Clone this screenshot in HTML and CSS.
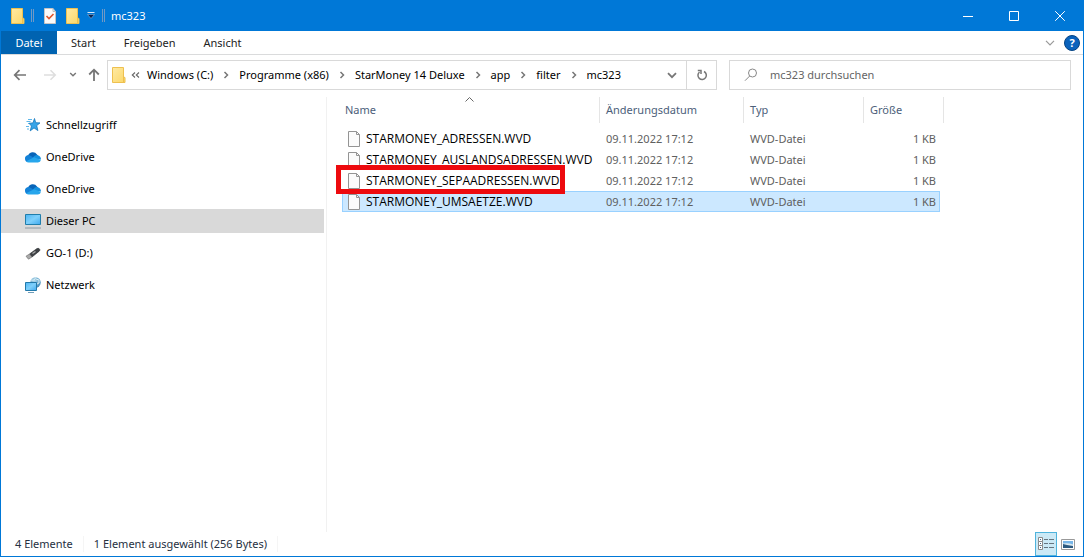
FILE: index.html
```html
<!DOCTYPE html>
<html lang="de">
<head>
<meta charset="utf-8">
<title>mc323</title>
<link rel="stylesheet" href="styles.css">
</head>
<body>
<svg class="defs" aria-hidden="true">
  <defs>
    <linearGradient id="g-folder" x1="0" y1="0" x2="1" y2="1"><stop offset="0" stop-color="#ffeaa4"/><stop offset="1" stop-color="#fbd768"/></linearGradient>
    <linearGradient id="g-screen" x1="0" y1="0" x2="1" y2="1"><stop offset="0" stop-color="#4db5f3"/><stop offset=".5" stop-color="#7fd0fb"/><stop offset="1" stop-color="#3fa9ee"/></linearGradient>
    <radialGradient id="g-globe" cx=".4" cy=".3" r=".8"><stop offset="0" stop-color="#b5dcee"/><stop offset="1" stop-color="#2f7fb4"/></radialGradient>
    <symbol id="folder" viewBox="0 0 14 16"><path d="M.5.5h11v9.5l1.500.5v5H.5z" fill="url(#g-folder)" stroke="#eec04f"/><path d="M11.500 10v5" stroke="#eec04f"/></symbol>
    <symbol id="file" viewBox="0 0 14 16"><path d="M1.500.5h8l3 3v12h-11z" fill="#fbfbfb" stroke="#949494"/><path d="M9.500.5v3h3" fill="none" stroke="#949494"/></symbol>
    <symbol id="cloud" viewBox="0 0 16 12"><path d="M3 5A5 5 0 0 1 12 3.500L14 6 8 8z" fill="#0864b8"/><path d="M0 8.200A3.500 3.500 0 0 1 4.500 4.200L12 8.500 2 11A3.500 3.500 0 0 1 0 8.200z" fill="#1482d8"/><path d="M8 6.500Q10 3 12.500 4.200 16 5 16 8.500 10 9 8 6.500z" fill="#1490df"/><path d="M1.200 10.300L9 6.200l6.800 2.900Q15.500 11.500 13 11.500H3.500Q2 11.500 1.200 10.300z" fill="#27a6ec"/></symbol>
    <symbol id="chev" viewBox="0 0 6 8"><path d="M1.500 1l3 3-3 3" fill="none" stroke="#777" stroke-width="1.500"/></symbol>
  </defs>
</svg>
<div class="window">
  <header class="titlebar">
    <div class="quick">
      <svg class="i-folder" viewBox="0 0 14 16"><use href="#folder"/></svg>
      <span class="bar bar-a"></span>
      <button class="plain" aria-label="Eigenschaften"><svg width="12" height="16" viewBox="0 0 12 16"><path d="M.5.500h8.500l2.500 3v12H.500z" fill="#fafafa" stroke="#c8c4c4"/><path d="M9 .5v3h2.500" fill="none" stroke="#bbb"/><path d="M2.500 8l2.500 2.500 4.500-4.500" fill="none" stroke="#df552e" stroke-width="1.600"/></svg></button>
      <button class="plain new-folder" aria-label="Neuer Ordner"><svg class="i-folder" viewBox="0 0 14 16"><use href="#folder"/></svg></button>
      <button class="plain more" aria-label="Symbolleiste anpassen"><svg width="8" height="7" viewBox="0 0 8 7"><path d="M.5.500h7" stroke="#d9e9f8"/><path d="M.5 2.500h7L4 6.500z" fill="#09234f" stroke="#a9c8ea" stroke-width=".5"/></svg></button>
      <span class="bar"></span>
    </div>
    <h1 class="title">mc323</h1>
    <div class="controls">
      <button aria-label="Minimieren"><svg width="10" height="10" viewBox="0 0 10 10"><path d="M0 5.500h10"/></svg></button>
      <button aria-label="Maximieren"><svg width="10" height="10" viewBox="0 0 10 10"><path d="M.5.500h9v9h-9z"/></svg></button>
      <button aria-label="Schließen"><svg width="10" height="10" viewBox="0 0 10 10"><path d="M.2.200l9.600 9.600M9.800.200L.2 9.800"/></svg></button>
    </div>
  </header>
  <nav class="ribbon">
    <button class="tab active">Datei</button>
    <button class="tab">Start</button>
    <button class="tab">Freigeben</button>
    <button class="tab">Ansicht</button>
    <button class="plain expand" aria-label="Menüband erweitern"><svg width="10" height="6" viewBox="0 0 10 6"><path d="M1 .8l4 4 4-4" fill="none" stroke="#999" stroke-width="1.200"/></svg></button>
    <button class="help" aria-label="Hilfe">?</button>
  </nav>
  <div class="address-row">
    <div class="history">
      <button class="plain" aria-label="Zurück"><svg width="14" height="12" viewBox="0 0 14 12"><path d="M13 6H2M6.500 1.200L1.700 6l4.800 4.800" fill="none" stroke="#767676" stroke-width="1.700"/></svg></button>
      <button class="plain fwd" aria-label="Vorwärts"><svg width="14" height="12" viewBox="0 0 14 12"><path d="M1 6h11M7.500 1.200L12.300 6l-4.800 4.800" fill="none" stroke="#dedede" stroke-width="1.500"/></svg></button>
      <button class="plain recent" aria-label="Zuletzt besucht"><svg width="8" height="6" viewBox="0 0 8 6"><path d="M1.200 1L4 3.800 6.800 1" fill="none" stroke="#777" stroke-width="1.400"/></svg></button>
      <button class="plain" aria-label="Nach oben"><svg width="12" height="14" viewBox="0 0 12 14"><path d="M6 13V2M1.200 6.500L6 1.700l4.800 4.800" fill="none" stroke="#767676" stroke-width="1.800"/></svg></button>
    </div>
    <div class="address">
      <svg class="i-folder" viewBox="0 0 14 16"><use href="#folder"/></svg>
      <svg class="dbl" width="9" height="6" viewBox="0 0 9 6"><path d="M4 .5L1.300 3 4 5.500M8 .5L5.300 3 8 5.500" fill="none" stroke="#666" stroke-width="1.100"/></svg>
      <div class="crumbs">
        <a href="#">Windows (C:)</a><svg class="chev"><use href="#chev"/></svg>
        <a href="#">Programme (x86)</a><svg class="chev"><use href="#chev"/></svg>
        <a href="#">StarMoney 14 Deluxe</a><svg class="chev"><use href="#chev"/></svg>
        <a href="#">app</a><svg class="chev"><use href="#chev"/></svg>
        <a href="#">filter</a><svg class="chev"><use href="#chev"/></svg>
        <a href="#">mc323</a>
      </div>
      <button class="plain drop" aria-label="Vorherige Orte"><svg width="10" height="7" viewBox="0 0 10 7"><path d="M1 1.200l4 4 4-4" fill="none" stroke="#777" stroke-width="1.800"/></svg></button>
      <button class="plain refresh" aria-label="Aktualisieren"><svg width="12" height="12" viewBox="0 0 12 12"><path d="M8 2.500A4.200 4.200 0 1 1 3.500 3" fill="none" stroke="#777" stroke-width="1.500"/><path d="M1.800 1.500H5V5" fill="none" stroke="#777" stroke-width="1.500"/></svg></button>
    </div>
    <label class="search">
      <svg width="14" height="14" viewBox="0 0 14 14"><circle cx="8.500" cy="5" r="4" fill="none" stroke="#888"/><path d="M5.700 8L1 12.700" stroke="#888"/></svg>
      <input type="text" placeholder="mc323 durchsuchen" aria-label="mc323 durchsuchen">
    </label>
  </div>
  <main class="main">
    <nav class="sidebar">
      <a href="#"><svg width="16" height="16" viewBox="0 0 16 16"><path d="M9.500 1.500l1.200 4.200 4.300.2-3.300 2.700 1.200 5-3.900-2.700-3.800 3 1.300-4.900-2.500-2.700 4-.4z" fill="#39a5e8" stroke="#1577bd" stroke-width=".8"/><path d="M3 2.500h4M1.500 4.500h4M3 6.500h1M1 9.500h3M2 12h2" stroke="#5eb7e9"/></svg>Schnellzugriff</a>
      <a href="#"><svg width="16" height="12"><use href="#cloud"/></svg>OneDrive</a>
      <a href="#"><svg width="16" height="12"><use href="#cloud"/></svg>OneDrive</a>
      <a href="#" class="current"><svg width="16" height="16" viewBox="0 0 16 16"><path d="M.5 1.500h15v10H.5z" fill="url(#g-screen)" stroke="#207dab"/><path d="M0 15h16" stroke="#8b9aa4"/></svg>Dieser PC</a>
      <a href="#"><svg width="16" height="16" viewBox="0 0 16 16"><path d="M4.500 9L12 3.500q2-.8 2.800 1 .2 1-.6 1.700L7 12z" fill="#3e4145" stroke="#292b2e" stroke-width=".6"/><path d="M1 11.200L4.500 9 7 12l-3.500 2.200z" fill="#aaa" stroke="#666" stroke-width=".6"/><path d="M7.500 8.500l3-2" stroke="#aaa" stroke-width="1.400"/></svg>GO-1 (D:)</a>
      <a href="#"><svg width="16" height="16" viewBox="0 0 16 16"><circle cx="10.500" cy="5.500" r="5.200" fill="url(#g-globe)"/><path d="M6 3q4 1 4.500-2.500M11 2l3 1v3l-2 1" fill="none" stroke="#d8eef5"/><path d="M.5 5.500h11v8H.5z" fill="url(#g-screen)" stroke="#2279aa"/><path d="M3 15.500h6" stroke="#6f9db9"/></svg>Netzwerk</a>
    </nav>
    <section class="files">
      <table>
        <colgroup><col><col class="c-date"><col class="c-type"><col class="c-size"></colgroup>
        <thead><tr>
          <th scope="col">Name<svg class="sort" width="9" height="5" viewBox="0 0 9 5"><path d="M.5 4.500l4-4 4 4" fill="none" stroke="#666"/></svg></th>
          <th scope="col">Änderungsdatum</th><th scope="col">Typ</th><th scope="col">Größe</th>
        </tr></thead>
        <tbody>
          <tr><td><span class="name"><svg class="i-file"><use href="#file"/></svg>STARMONEY_ADRESSEN.WVD</span></td><td>09.11.2022 17:12</td><td>WVD-Datei</td><td>1 KB</td></tr>
          <tr><td><span class="name"><svg class="i-file"><use href="#file"/></svg>STARMONEY_AUSLANDSADRESSEN.WVD</span></td><td>09.11.2022 17:12</td><td>WVD-Datei</td><td>1 KB</td></tr>
          <tr><td><span class="name marked"><svg class="i-file"><use href="#file"/></svg>STARMONEY_SEPAADRESSEN.WVD</span></td><td>09.11.2022 17:12</td><td>WVD-Datei</td><td>1 KB</td></tr>
          <tr class="selected"><td><span class="name"><svg class="i-file"><use href="#file"/></svg>STARMONEY_UMSAETZE.WVD</span></td><td>09.11.2022 17:12</td><td>WVD-Datei</td><td>1 KB</td></tr>
        </tbody>
      </table>
    </section>
  </main>
  <footer class="status">
    <span class="info">4 Elemente</span><span class="info">1 Element ausgewählt (256 Bytes)</span>
    <div class="views">
      <button class="view on" aria-label="Details"><svg width="16" height="14" viewBox="0 0 16 14"><path d="M.5.500h4v4h-4zM.5 4.500h4v4h-4zM.5 8.500h4v4h-4z" fill="#fff" stroke="#8a8a8a"/><path d="M2 2.500h1M2 6.500h1M2 10.500h1" stroke="#468"/><path d="M6 2.500h4M11 2.500h5M6 6.500h4M11 6.500h5M6 10.500h4M11 10.500h5" stroke="#667580"/></svg></button>
      <button class="view" aria-label="Große Symbole"><svg width="14" height="11" viewBox="0 0 14 11"><path d="M.5.500h13v10H.5z" fill="#fff" stroke="#999"/><path d="M2 2h10v7H2z" fill="#78b6e8"/><path d="M2 4.500q5-1 10 1V7H2z" fill="#dceaf1"/><path d="M2 5l4 1 6 1v2H2z" fill="#2c5a80"/></svg></button>
    </div>
  </footer>
</div>
</body>
</html>
```

FILE: styles.css
```css
* { box-sizing: border-box; }
body { margin: 0; font: 11px/16px "Noto Sans", "Open Sans", sans-serif; color: #000; background: #fff; }
button, input { font: inherit; color: inherit; }
a { color: inherit; text-decoration: none; }
svg { display: block; flex: none; }
.defs { position: absolute; width: 0; height: 0; }
.window { display: flex; flex-direction: column; min-height: 100vh; border: 1px solid #0078d7; border-top: 0; }
.plain { display: flex; padding: 0; border: 0; background: none; }
.i-folder { width: 14px; height: 16px; }

.titlebar { display: flex; align-items: center; height: 31px; background: #0078d7; color: #fff; }
.quick { display: flex; align-items: center; padding-left: 10px; }
.bar { width: 3px; height: 13px; border: solid #7299c4; border-width: 0 1px; }
.bar-a { margin: 0 10px 0 6px; }
.new-folder { margin-left: 10px; }
.more { margin: 0 7px; }
.title { margin: 0 0 0 6px; font-size: 11px; font-weight: 400; }
.controls { display: flex; align-self: stretch; margin-left: auto; }
.controls button { display: flex; align-items: center; justify-content: center; width: 46px; padding: 0; border: 0; background: none; }
.controls path { fill: none; stroke: #fff; }

.ribbon { display: flex; align-items: center; height: 24px; border-bottom: 1px solid #dadbdc; padding-right: 3px; }
.tab { align-self: stretch; padding: 0 14px; border: 0; background: none; color: #222; }
.active { width: 56px; background: #0063b1; color: #fff; }
.expand { margin-left: auto; }
.help { width: 16px; height: 16px; margin-left: 9px; padding: 0; border: 1px solid #064484; border-radius: 50%; background: #0a62bc; color: #fff; font-weight: 700; line-height: 14px; }

.address-row { display: flex; align-items: center; height: 40px; padding: 0 12px; }
.history { display: flex; align-items: center; width: 94px; }
.fwd { margin-left: 16px; }
.recent { margin: 0 11px 0 12px; }
.address { display: flex; flex: 610 1 610px; align-items: center; height: 30px; border: 1px solid #d9d9d9; padding-left: 4px; min-width: 0; }
.dbl { margin: 0 7px 0 5px; }
.crumbs { display: flex; flex: 1; align-items: center; gap: 10px; min-width: 0; white-space: nowrap; }
.chev { width: 6px; height: 8px; }
.drop { margin-right: 9px; }
.refresh { align-self: stretch; align-items: center; justify-content: center; width: 30px; border-left: 1px solid #d9d9d9; }
.search { display: flex; flex: 342 1 342px; align-items: center; gap: 12px; height: 30px; margin-left: 12px; padding-left: 14px; border: 1px solid #d9d9d9; }
.search input { flex: 1; min-width: 0; padding: 0; border: 0; outline: 0; background: none; }
.search input::placeholder { color: #656565; opacity: 1; }

.main { display: flex; flex: 1; padding-top: 2px; }
.sidebar { display: flex; flex-direction: column; gap: 8px; width: 326px; padding: 16px 2px 0 0; border-right: 1px solid #f1f1f1; }
.sidebar a { display: flex; align-items: center; gap: 5px; height: 24px; padding-left: 24px; }
.sidebar .current { background: #d9d9d9; }

.files { flex: 1; padding-left: 15px; }
table { width: 598px; table-layout: fixed; border-collapse: separate; border-spacing: 0; }
.c-date { width: 144px; }
.c-type { width: 120px; }
.c-size { width: 77px; }
th { position: relative; height: 26px; padding: 0 0 0 6px; border-left: 1px solid #e5e5e5; font-weight: 400; text-align: left; color: #4c607a; }
th:first-child { padding-left: 3px; border-left: 0; }
th:last-child::after { content: ""; position: absolute; top: 0; bottom: 0; right: -4px; border-right: 1px solid #e5e5e5; }
.sort { position: absolute; top: 0; left: 48%; }
tbody::before { content: ""; display: block; height: 5px; }
td { height: 21px; padding: 0 0 0 7px; color: #606060; white-space: nowrap; }
td:first-child { padding-left: 5px; color: #000; font-family: "Open Sans", "Noto Sans", sans-serif; font-size: 12px; }
td:last-child { padding-right: 4px; text-align: right; }
.name { position: relative; display: inline-flex; align-items: center; gap: 5px; vertical-align: middle; }
.i-file { width: 14px; height: 16px; }
.marked::after { content: ""; position: absolute; z-index: 1; inset: -8px -6px -5px -11px; border: 5px solid #ed0a0e; }
.selected td { background: #cce8ff; border: solid #99d1ff; border-width: 1px 0; }
.selected td:first-child { border-left-width: 1px; padding-left: 4px; }
.selected td:last-child { border-right-width: 1px; padding-right: 3px; }

.status { display: flex; align-items: center; height: 24px; padding-left: 14px; color: #26303f; }
.info { margin-right: 10px; padding-right: 10px; border-right: 1px solid #f5f5f5; }
.views { display: flex; align-self: stretch; margin-left: auto; padding-right: 4px; }
.view { display: flex; align-items: center; justify-content: center; width: 22px; padding: 0; border: 0; background: none; }
.on { border: 1px solid #4fb3dc; background: #cbe9f6; }
```
